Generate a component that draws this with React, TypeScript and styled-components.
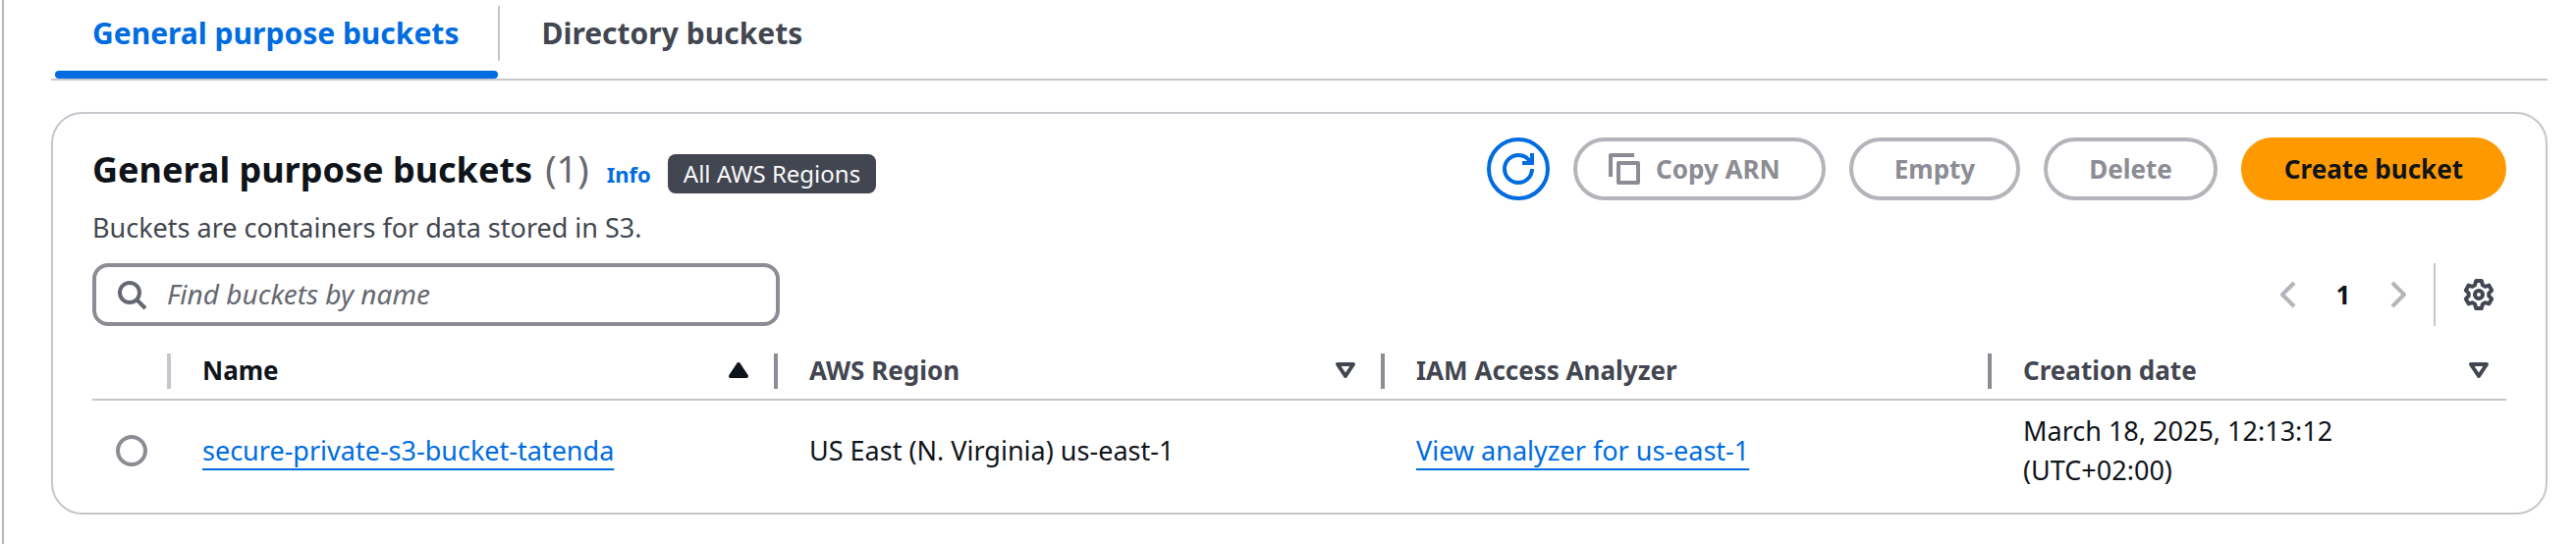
import React from 'react';
import styled, { createGlobalStyle } from 'styled-components';

const GlobalStyle = createGlobalStyle`
  *, *::before, *::after { box-sizing: border-box; }
  html { background: #fff; }
  body {
    margin: 0;
    color: #0f141a;
    font-family: 'Noto Sans', 'Open Sans', sans-serif;
    font-size: 27px;
    line-height: 40px;
  }
  button, input { font: inherit; color: inherit; }
  button { margin: 0; padding: 0; border: 0; background: none; }
`;

const Page = styled.main`
  min-height: 100vh;
  margin-left: 2px;
  padding: 0 29px 24px 48px;
  border-left: 2px solid #b4b4bb;
`;

const TabList = styled.nav`
  display: flex;
  height: 82px;
  border-bottom: 2px solid #c6c6cd;
`;

const Tab = styled.button<{ $active?: boolean }>`
  position: relative;
  padding: 0 40px 12px 42px;
  font-size: 30px;
  font-weight: 700;
  color: ${(p) => (p.$active ? '#006ce0' : '#424650')};

  &::after {
    content: '';
    position: absolute;
    display: ${(p) => (p.$active ? 'block' : 'none')};
    left: 4px;
    right: 0;
    bottom: 0;
    height: 8px;
    border-radius: 4px;
    background: #006ce0;
  }
`;

const TabDivider = styled.span`
  width: 2px;
  height: 56px;
  margin-top: 6px;
  background: #c6c6cd;
`;

const Card = styled.section`
  margin-top: 32px;
  padding: 24px 40px 14px;
  border: 2px solid #c6c6cd;
  border-radius: 32px;
`;

const CardHeader = styled.header`
  display: flex;
  justify-content: space-between;
  align-items: flex-start;
`;

const TitleRow = styled.div`
  display: flex;
  align-items: baseline;
  padding-top: 5px;
`;

const Title = styled.h2`
  margin: 0;
  font-size: 36px;
  line-height: 52px;
  font-weight: 700;
`;

const Count = styled.span`
  margin-left: 13px;
  font-size: 38px;
  font-weight: 400;
  color: #656871;
`;

const InfoLink = styled.a`
  margin-left: 18px;
  font-size: 22px;
  font-weight: 700;
  color: #006ce0;
  text-decoration: none;
`;

const Badge = styled.span`
  margin-left: 17px;
  padding: 0 16px;
  border-radius: 8px;
  background: #424650;
  color: #f9f9fa;
  font-size: 24px;
`;

const Description = styled.p`
  margin: 13px 0 0;
  color: #424650;
`;

const Actions = styled.div`
  display: flex;
  gap: 24px;
`;

const Button = styled.button<{ $primary?: boolean }>`
  display: flex;
  align-items: center;
  gap: 16px;
  height: 64px;
  padding: 0 ${(p) => (p.$primary ? '40px' : '42px')};
  border: 4px solid ${(p) => (p.$primary ? '#ff9900' : '#b4b4bb')};
  border-radius: 32px;
  background: ${(p) => (p.$primary ? '#ff9900' : '#fff')};
  color: ${(p) => (p.$primary ? '#0f141a' : '#8c8c94')};
  font-size: 26px;
  font-weight: 700;
  white-space: nowrap;
`;

const CopyButton = styled(Button)`
  padding-left: 32px;
`;

const RefreshButton = styled(Button)`
  justify-content: center;
  width: 64px;
  padding: 0;
  border-color: #006ce0;
  color: #006ce0;
`;

const Toolbar = styled.div`
  display: flex;
  justify-content: space-between;
  align-items: center;
  margin-top: 16px;
`;

const SearchField = styled.label`
  display: flex;
  align-items: center;
  gap: 20px;
  width: 700px;
  height: 64px;
  padding: 0 20px;
  border: 4px solid #8c8c94;
  border-radius: 16px;
  color: #656871;
`;

const SearchInput = styled.input`
  flex: 1;
  min-width: 0;
  padding: 0;
  border: 0;
  outline: 0;
  background: none;

  &::placeholder {
    color: #656871;
    font-size: 28px;
    font-style: italic;
    opacity: 1;
  }
`;

const Pagination = styled.nav`
  display: flex;
  align-items: center;
`;

const IconButton = styled.button<{ $muted?: boolean }>`
  display: flex;
  color: ${(p) => (p.$muted ? '#b4b4bb' : '#424650')};
`;

const PageNumber = styled.button`
  width: 80px;
  font-size: 26px;
  font-weight: 700;
`;

const ToolbarDivider = styled.span`
  width: 2px;
  height: 64px;
  margin: 0 28px 0 20px;
  background: #c6c6cd;
`;

const PreferencesButton = styled(IconButton)`
  margin-right: 12px;
`;

const Table = styled.table`
  width: 100%;
  margin-top: 12px;
  table-layout: fixed;
  border-collapse: separate;
  border-spacing: 0;
`;

const SelectColumn = styled.col`
  width: 80px;
`;

const DataColumn = styled.col`
  width: 618px;
`;

const HeaderCell = styled.th<{ $sorted?: boolean; $divider?: string }>`
  position: relative;
  height: 64px;
  padding: 4px 24px 4px 32px;
  border-bottom: 2px solid #c6c6cd;
  color: ${(p) => (p.$sorted ? '#0f141a' : '#424650')};
  font-size: 26px;
  font-weight: 700;
  text-align: left;

  &:last-child { padding-right: 12px; }

  &::after {
    content: '';
    position: absolute;
    display: ${(p) => (p.$divider ? 'block' : 'none')};
    right: 0;
    top: 16px;
    width: 4px;
    height: 36px;
    background: ${(p) => p.$divider};
  }
`;

const HeaderContent = styled.div`
  display: flex;
  align-items: center;
  justify-content: space-between;
  padding-top: 4px;
`;

const Cell = styled.td`
  padding: 11px 32px 9px;
  vertical-align: middle;

  &:first-child { padding: 11px 24px 9px; }
  &:last-child { padding-right: 120px; }
`;

const Radio = styled.input`
  display: block;
  appearance: none;
  width: 32px;
  height: 32px;
  margin: 0;
  border: 4px solid #8c8c94;
  border-radius: 50%;
  background: #fff;
`;

const CellLink = styled.a`
  color: #006ce0;
  text-decoration: underline;
  text-decoration-thickness: 2px;
  text-underline-offset: 8px;
  text-decoration-skip-ink: none;
`;

const Glyph = styled.svg`
  display: block;
  flex: none;
  width: 32px;
  height: 32px;
  fill: none;
  stroke: currentColor;
  stroke-width: 2;
`;

const Search = () => (
  <Glyph viewBox="0 0 16 16" aria-hidden="true">
    <circle cx="7" cy="7" r="5" />
    <path d="m15 15-4.500-4.500" />
  </Glyph>
);

const Refresh = () => (
  <Glyph viewBox="0 0 16 16" aria-hidden="true">
    <path d="M15 8c0 3.870-3.130 7-7 7s-7-3.130-7-7 3.130-7 7-7c2.790 0 5.200 1.630 6.330 4" />
    <path d="M10 5h5V0" />
  </Glyph>
);

const Copy = () => (
  <Glyph viewBox="0 0 16 16" aria-hidden="true">
    <path d="M15 5H5v10h10V5Z" strokeLinejoin="round" />
    <path d="M13 1H1v11" strokeLinejoin="round" />
  </Glyph>
);

const Angle = ({ next }: { next?: boolean }) => (
  <Glyph viewBox="0 0 16 16" aria-hidden="true">
    <path d={next ? 'm5 2 6 6-6 6' : 'M11 2 5 8l6 6'} strokeLinejoin="round" />
  </Glyph>
);

const Gear = () => (
  <Glyph viewBox="0 0 16 16" aria-hidden="true" strokeLinejoin="round">
    <path d="M6.600 1H9.400L9.950 3.180 11.200 3.900 13.200 3.300 14.600 5.840 13.150 7.280V8.720L14.600 10.160 13.200 12.700 11.200 12.100 9.950 12.820 9.400 15H6.600L6.050 12.820 4.800 12.100 2.800 12.700 1.400 10.160 2.850 8.720V7.280L1.400 5.840 2.800 3.300 4.800 3.900 6.050 3.180Z" />
    <circle cx="8" cy="8" r="2" />
  </Glyph>
);

const SortIcon = ({ ascending }: { ascending?: boolean }) => (
  <Glyph viewBox="0 0 16 16" aria-hidden="true" strokeLinejoin="round">
    {ascending ? <path d="M4 11h8L8 5Z" fill="currentColor" /> : <path d="M4 5h8l-4 6Z" />}
  </Glyph>
);

export default function App() {
  return (
    <>
      <GlobalStyle />
      <Page>
        <TabList aria-label="Bucket types">
          <Tab type="button" $active aria-current="page">General purpose buckets</Tab>
          <TabDivider />
          <Tab type="button">Directory buckets</Tab>
        </TabList>

        <Card>
          <CardHeader>
            <div>
              <TitleRow>
                <Title>General purpose buckets<Count>(1)</Count></Title>
                <InfoLink href="#info">Info</InfoLink>
                <Badge>All AWS Regions</Badge>
              </TitleRow>
              <Description>Buckets are containers for data stored in S3.</Description>
            </div>
            <Actions>
              <RefreshButton type="button" aria-label="Refresh"><Refresh /></RefreshButton>
              <CopyButton type="button" disabled><Copy />Copy ARN</CopyButton>
              <Button type="button" disabled>Empty</Button>
              <Button type="button" disabled>Delete</Button>
              <Button type="button" $primary>Create bucket</Button>
            </Actions>
          </CardHeader>

          <Toolbar>
            <SearchField>
              <Search />
              <SearchInput type="text" placeholder="Find buckets by name" aria-label="Find buckets by name" />
            </SearchField>
            <Pagination aria-label="Pagination">
              <IconButton type="button" $muted disabled aria-label="Previous page"><Angle /></IconButton>
              <PageNumber type="button" aria-current="page">1</PageNumber>
              <IconButton type="button" $muted disabled aria-label="Next page"><Angle next /></IconButton>
              <ToolbarDivider />
              <PreferencesButton type="button" aria-label="Preferences"><Gear /></PreferencesButton>
            </Pagination>
          </Toolbar>

          <Table>
            <colgroup>
              <SelectColumn />
              <DataColumn />
              <DataColumn />
              <DataColumn />
              <col />
            </colgroup>
            <thead>
              <tr>
                <HeaderCell $divider="#c6c6cd" aria-label="Selection" />
                <HeaderCell $sorted $divider="#8c8c94" scope="col" aria-sort="ascending">
                  <HeaderContent>Name<SortIcon ascending /></HeaderContent>
                </HeaderCell>
                <HeaderCell $divider="#8c8c94" scope="col">
                  <HeaderContent>AWS Region<SortIcon /></HeaderContent>
                </HeaderCell>
                <HeaderCell $divider="#8c8c94" scope="col">
                  <HeaderContent>IAM Access Analyzer</HeaderContent>
                </HeaderCell>
                <HeaderCell scope="col">
                  <HeaderContent>Creation date<SortIcon /></HeaderContent>
                </HeaderCell>
              </tr>
            </thead>
            <tbody>
              <tr>
                <Cell><Radio type="radio" name="bucket" aria-label="secure-private-s3-bucket-tatenda" /></Cell>
                <Cell><CellLink href="#bucket">secure-private-s3-bucket-tatenda</CellLink></Cell>
                <Cell>US East (N. Virginia) us-east-1</Cell>
                <Cell><CellLink href="#analyzer">View analyzer for us-east-1</CellLink></Cell>
                <Cell>March 18, 2025, 12:13:12 (UTC+02:00)</Cell>
              </tr>
            </tbody>
          </Table>
        </Card>
      </Page>
    </>
  );
}
